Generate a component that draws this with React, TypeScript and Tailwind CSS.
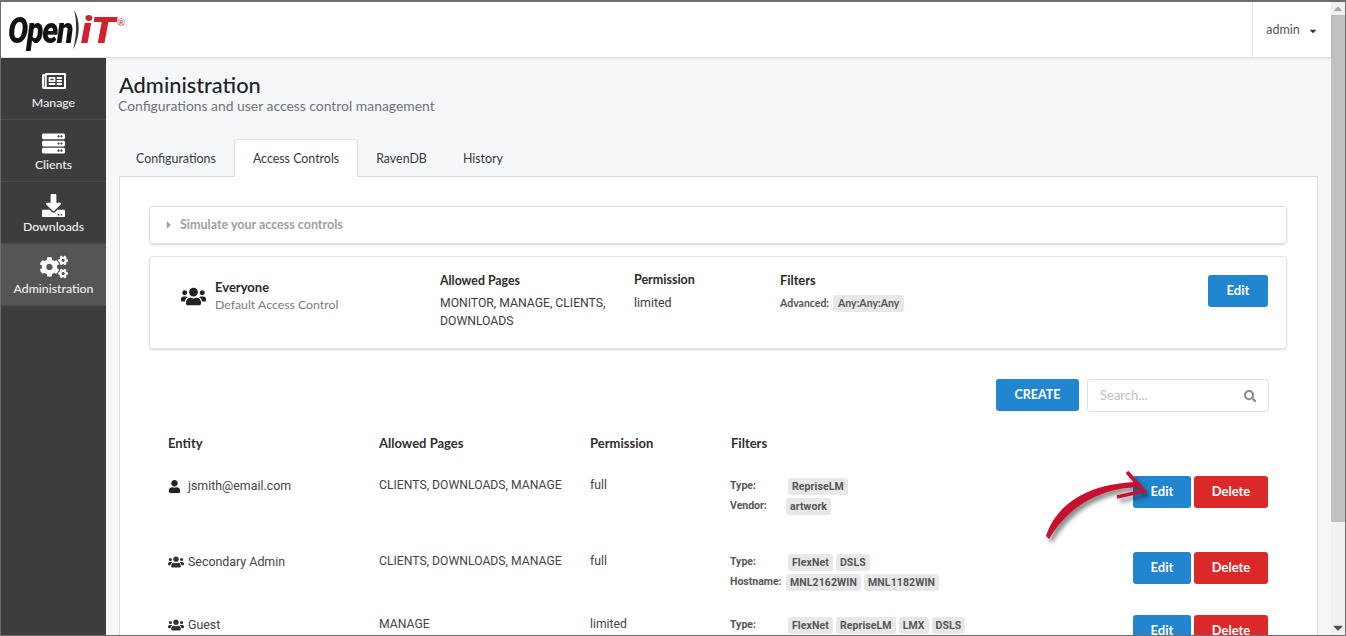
import React from "react";
import { FaRegNewspaper, FaServer, FaDownload, FaCogs, FaUsers, FaUser, FaSearch, FaCaretRight, FaCaretDown, FaCaretUp } from "react-icons/fa";

const lato = "font-['Lato',sans-serif]";
const roboto = "font-['Roboto',sans-serif]";

function NavItem({ icon, label, active }: { icon: React.ReactNode; label: string; active?: boolean }) {
  return (
    <div className={`h-[62px] flex flex-col items-center pt-[11px] border-b border-[#4a4a4a] ${active ? "bg-[#555555]" : ""}`}>
      <div className="h-[24px] flex items-center text-white">{icon}</div>
      <div className="text-[12.3px] leading-[18px] mt-[1px] font-medium text-[#f0f0f0]">{label}</div>
    </div>
  );
}

function Tab({ label, active }: { label: string; active?: boolean }) {
  return (
    <div className={`px-[18px] flex items-center text-[12.4px] text-[#333a40] ${active ? "h-[38px] pt-[1px] bg-white border border-[#dcdcdc] border-b-0 rounded-t-[4px] relative z-10" : "h-[37px] pt-[3px]"}`}>
      {label}
    </div>
  );
}

function Tag({ children }: { children: React.ReactNode }) {
  return <span className="inline-block bg-[#e8e8e8] text-[#555] rounded-[3px] px-[4px] h-[17px] leading-[17px] text-[10.5px] font-bold tracking-[0.1px] mr-[3px]">{children}</span>;
}

function FilterLine({ label, tags, labelW }: { label: string; tags: string[]; labelW: number }) {
  return (
    <div className="flex items-center h-[20px] -ml-[1px]">
      <span className="text-[10.5px] font-bold text-[#555]" style={{ width: labelW }}>{label}</span>
      {tags.map((t) => <Tag key={t}>{t}</Tag>)}
    </div>
  );
}

function Row({ icon, name, pages, perm, h, lines }: { icon: React.ReactNode; name: string; pages: string; perm: string; h: string; lines: React.ReactNode }) {
  return (
    <div className={`grid grid-cols-[211px_211px_141px_1fr] text-[12.2px] text-[#444] ${h}`}>
      <div className="flex items-start leading-[18px]">
        <span className="w-[20px] h-[18px] mt-[1px] flex items-center">{icon}</span>
        <span className="text-[12.4px] mt-[1px]">{name}</span>
      </div>
      <div className="leading-[18px]">{pages}</div>
      <div className="leading-[18px]">{perm}</div>
      <div className="flex justify-between">
        <div>{lines}</div>
        <div className={`flex gap-[3px] ${lato} font-bold text-white text-[13px]`}>
          <button className="w-[58px] h-[32px] rounded-[3px] bg-[#2185d0]">Edit</button>
          <button className="w-[74px] h-[32px] rounded-[3px] bg-[#db2828]">Delete</button>
        </div>
      </div>
    </div>
  );
}

export default function App() {
  return (
    <div className={`h-[636px] w-[1346px] overflow-hidden border border-[#6e6e6e] border-t-2 flex flex-col ${lato} bg-[#f6f7f9] relative`}>
      <div className="flex flex-1 min-h-0">
        <div className="flex-1 min-w-0 flex flex-col">
          <header className="h-[56px] shrink-0 bg-white border-b border-[#dedede] shadow-[0_1px_3px_rgba(0,0,0,0.08)] flex justify-between z-20">
            <div className="flex items-center pl-[7px] pt-[2px] select-none relative">
              <span className="font-['Roboto',sans-serif] font-black italic text-[36px] tracking-[-1.5px] text-[#111] origin-left scale-x-[0.84] w-[65px] inline-block leading-none">Open</span>
              <svg width="8" height="42" viewBox="0 0 8 42" className="-mt-[1px]"><path d="M1 1C7 10 8 26 0 41C4 26 4 12 1 1Z" fill="#333" /></svg>
              <span className="font-['Roboto',sans-serif] font-black italic text-[37px] tracking-[-0.5px] text-[#d3202f] leading-none origin-left scale-x-[1.08] w-[37px] inline-block">iT</span>
              <span className="text-[#d3202f] text-[10px] self-start mt-[11px] -ml-[1px]">®</span>
            </div>
            <div className="w-[79px] border-l border-[#e4e4e4] flex items-center justify-center gap-[8px] pt-[2px] text-[12.5px] text-[#555]">
              <span>admin</span>
              <FaCaretDown className="text-[10px] text-[#333]" />
            </div>
          </header>
          <div className="flex-1 flex min-h-0">
            <nav className="w-[105px] shrink-0 bg-[#3d3d3d]">
              <NavItem label="Manage" icon={<FaRegNewspaper className="text-[24px]" />} />
              <NavItem label="Clients" icon={<FaServer className="text-[23px]" />} />
              <NavItem label="Downloads" icon={<FaDownload className="text-[23px]" />} />
              <NavItem label="Administration" active icon={<FaCogs className="text-[28px]" />} />
            </nav>
            <main className="flex-1 min-w-0 pl-[13px] pr-[13px]">
              <h1 className="text-[21.8px] leading-[24px] mt-[15px] text-[#1d2329] font-medium">Administration</h1>
              <p className="text-[13.9px] leading-[18px] text-[#6f7479] -ml-[1px]">Configurations and user access control management</p>
              <div className="flex mt-[24px] h-[37px] -ml-[1px]">
                <Tab label="Configurations" />
                <Tab label="Access Controls" active />
                <Tab label="RavenDB" />
                <Tab label="History" />
              </div>
              <section className="bg-white border border-[#dcdcdc] pl-[29px] pr-[30px] pt-[29px] h-[600px]">
                <div className="h-[38px] rounded-[4px] border border-[#dedede] shadow-[0_1px_2px_rgba(0,0,0,0.15)] flex items-center pl-[13px] text-[12.5px] font-bold text-[#a0a0a0]">
                  <FaCaretRight className="text-[12px] mr-[5px]" />
                  <span>Simulate your access controls</span>
                </div>
                <div className="mt-[12px] h-[93px] rounded-[4px] border border-[#e2e2e2] shadow-[0_1px_2px_rgba(0,0,0,0.15)] grid grid-cols-[290px_194px_146px_1fr] text-[#333]">
                  <div className="flex items-center pl-[31px] pb-[13px]">
                    <FaUsers className="text-[25px] text-[#222] mr-[9px]" />
                    <div>
                      <div className="text-[13px] leading-[17px] font-bold text-[#2a2a2a]">Everyone</div>
                      <div className="text-[12.3px] leading-[17px] text-[#7b7b7b]">Default Access Control</div>
                    </div>
                  </div>
                  <div className="pt-[14px]">
                    <div className="text-[12.3px] leading-[18px] mt-[1px] font-bold text-[#2a2a2a]">Allowed Pages</div>
                    <div className={`${roboto} text-[12.2px] leading-[18px] mt-[4px] w-[175px] text-[#3c3c3c]`}>MONITOR, MANAGE, CLIENTS, DOWNLOADS</div>
                  </div>
                  <div className="pt-[14px]">
                    <div className="text-[12.5px] leading-[18px] font-bold text-[#2a2a2a]">Permission</div>
                    <div className={`${roboto} text-[12.4px] leading-[18px] mt-[5px] text-[#3c3c3c]`}>limited</div>
                  </div>
                  <div className="pt-[14px] pr-[18px] flex justify-between">
                    <div>
                      <div className="text-[12.8px] leading-[18px] font-bold text-[#2a2a2a]">Filters</div>
                      <div className="flex items-center mt-[6px] text-[10.5px] font-bold text-[#555]">
                        <span className="mr-[4px]">Advanced:</span>
                        <span className="inline-block bg-[#e8e8e8] rounded-[3px] px-[5px] h-[17px] leading-[17px]">Any:Any:Any</span>
                      </div>
                    </div>
                    <button className="w-[60px] h-[32px] mt-[4px] rounded-[3px] bg-[#2185d0] text-white font-bold text-[13px]">Edit</button>
                  </div>
                </div>
                <div className="flex justify-end gap-[8px] mt-[30px] pr-[18px]">
                  <button className="w-[83px] h-[32px] rounded-[3px] bg-[#2185d0] text-white font-bold text-[12.5px]">CREATE</button>
                  <div className="w-[182px] h-[33px] rounded-[3px] border border-[#e0e0e0] flex items-center justify-between pt-[1px] px-[12px] text-[13px] text-[#c0c0c0]">
                    <span>Search...</span>
                    <FaSearch className="text-[12.5px] text-[#8a8a8a]" />
                  </div>
                </div>
                <div className={`px-[19px] ${roboto}`}>
                  <div className={`grid grid-cols-[211px_211px_141px_1fr] mt-[21px] h-[43px] ${lato} font-bold text-[13px] leading-[20px] text-[#2f2f2f]`}>
                    <div>Entity</div><div>Allowed Pages</div><div>Permission</div><div>Filters</div>
                  </div>
                  <Row h="h-[76px]" icon={<FaUser className="text-[13px] text-[#222]" />} name="jsmith@email.com" pages="CLIENTS, DOWNLOADS, MANAGE" perm="full"
                    lines={<><FilterLine label="Type:" labelW={58} tags={["RepriseLM"]} /><FilterLine label="Vendor:" labelW={56} tags={["artwork"]} /></>} />
                  <Row h="h-[63px]" icon={<FaUsers className="text-[16px] text-[#333]" />} name="Secondary Admin" pages="CLIENTS, DOWNLOADS, MANAGE" perm="full"
                    lines={<><FilterLine label="Type:" labelW={58} tags={["FlexNet", "DSLS"]} /><FilterLine label="Hostname:" labelW={56} tags={["MNL2162WIN", "MNL1182WIN"]} /></>} />
                  <Row h="h-[63px]" icon={<FaUsers className="text-[16px] text-[#333]" />} name="Guest" pages="MANAGE" perm="limited"
                    lines={<FilterLine label="Type:" labelW={58} tags={["FlexNet", "RepriseLM", "LMX", "DSLS"]} />} />
                </div>
              </section>
            </main>
          </div>
        </div>
        <div className="w-[14px] shrink-0 bg-[#f1f1f1] flex flex-col items-center">
          <FaCaretUp className="text-[10px] text-[#a8a8a8] h-[13px]" />
          <div className="w-[14px] h-[507px] bg-[#c1c1c1]" />
          <div className="flex-1" />
          <FaCaretDown className="text-[10px] text-[#505050] h-[15px]" />
        </div>
      </div>
      <svg className="absolute left-[1040px] top-[464px] pointer-events-none drop-shadow-[3px_4px_2px_rgba(0,0,0,0.45)]" width="110" height="80" viewBox="0 0 110 80">
        <path d="M5 70C14 42 42 17 98 16L100 21C52 22 24 46 8 73Z" fill="#c8102e" />
        <path d="M86 6L103 25L76 31" fill="none" stroke="#c8102e" strokeWidth="3.5" strokeLinejoin="miter" />
      </svg>
    </div>
  );
}
